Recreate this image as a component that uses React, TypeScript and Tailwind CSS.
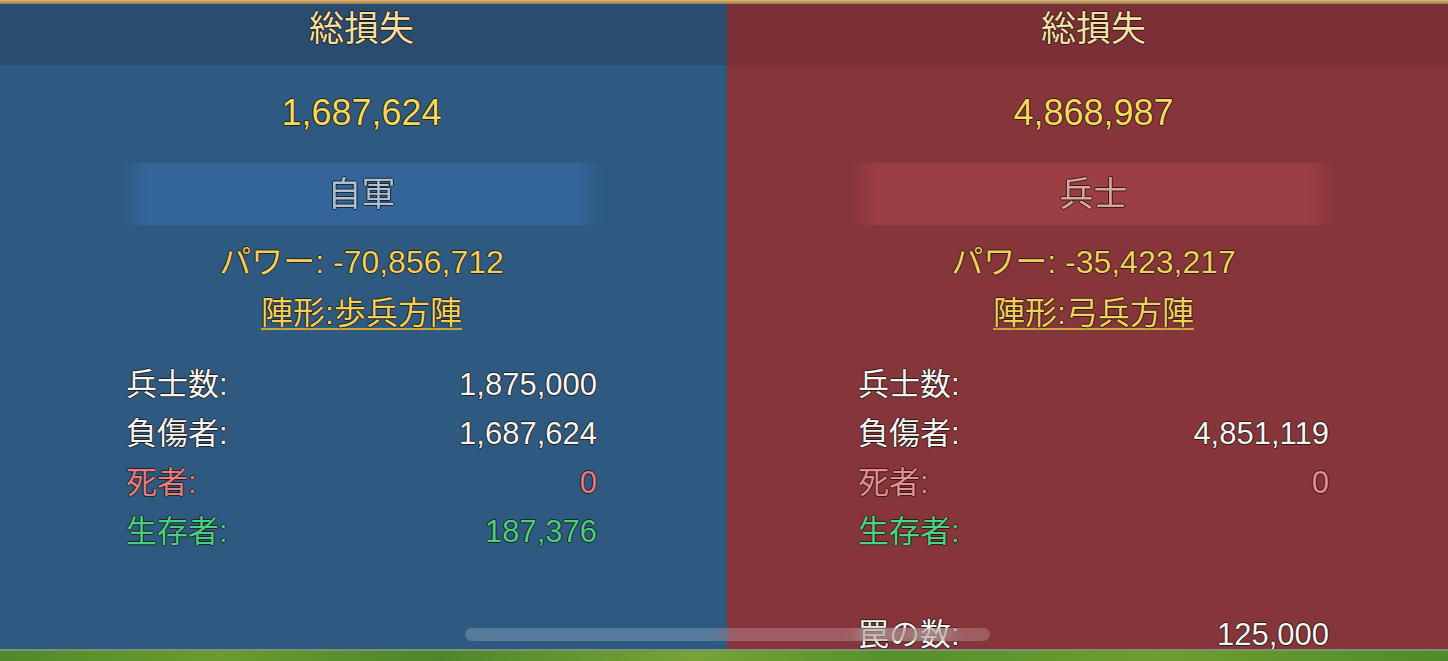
import React from "react";

type Tone = "plain" | "dead" | "alive";

type Stat = { label: string; value?: string; tone: Tone };

type Side = {
  key: string;
  title: string;
  total: string;
  unit: string;
  power: string;
  formation: string;
  stats: Stat[];
  extra?: Stat[];
  theme: {
    panel: string;
    header: string;
    badge: string;
    unitText: string;
    dead: string;
    alive: string;
    pad: string;
  };
};

const outline =
  "[text-shadow:-1px_0_rgba(30,20,10,0.8),1px_0_rgba(30,20,10,0.8),0_-1px_rgba(30,20,10,0.8),0_1px_rgba(30,20,10,0.8)]";

const sides: Side[] = [
  {
    key: "own",
    title: "総損失",
    total: "1,687,624",
    unit: "自軍",
    power: "パワー: -70,856,712",
    formation: "陣形:歩兵方陣",
    stats: [
      { label: "兵士数:", value: "1,875,000", tone: "plain" },
      { label: "負傷者:", value: "1,687,624", tone: "plain" },
      { label: "死者:", value: "0", tone: "dead" },
      { label: "生存者:", value: "187,376", tone: "alive" },
    ],
    theme: {
      panel: "w-[727px] bg-[#2e5a81]",
      header: "bg-[#2a4c6f]",
      badge: "bg-[#33659a]",
      unitText: "text-[#a9c1da]",
      dead: "text-[#e57c80]",
      alive: "text-[#45d084]",
      pad: "pr-[4px]",
    },
  },
  {
    key: "enemy",
    title: "総損失",
    total: "4,868,987",
    unit: "兵士",
    power: "パワー: -35,423,217",
    formation: "陣形:弓兵方陣",
    stats: [
      { label: "兵士数:", tone: "plain" },
      { label: "負傷者:", value: "4,851,119", tone: "plain" },
      { label: "死者:", value: "0", tone: "dead" },
      { label: "生存者:", tone: "alive" },
    ],
    extra: [
      { label: "", tone: "plain" },
      { label: "罠の数:", value: "125,000", tone: "plain" },
    ],
    theme: {
      panel: "flex-1 bg-[#86353b]",
      header: "bg-[#7a3036]",
      badge: "bg-[#9c3f43]",
      unitText: "text-[#dba2a2]",
      dead: "text-[#e88d91]",
      alive: "text-[#48d586]",
      pad: "pl-[12px]",
    },
  },
];

function StatRow({ stat, side }: { stat: Stat; side: Side }) {
  const color =
    stat.tone === "dead"
      ? side.theme.dead
      : stat.tone === "alive"
        ? side.theme.alive
        : "text-[#f5f5f5]";
  return (
    <div className={`flex h-[49px] items-center justify-between text-[31px] leading-[49px] ${color} ${outline}`}>
      <span>{stat.label}</span>
      <span>{stat.value ?? ""}</span>
    </div>
  );
}

function Panel({ side }: { side: Side }) {
  return (
    <div className={`flex flex-col overflow-hidden ${side.theme.panel}`}>
      <div className={`flex h-[61px] shrink-0 items-center justify-center pb-[12px] ${side.theme.header} ${side.theme.pad}`}>
        <span className={`text-[35px] leading-none text-[#f5dfa4] ${outline}`}>{side.title}</span>
      </div>

      <div className={`flex flex-col items-center ${side.theme.pad}`}>
        <div className={`mt-[28px] h-[40px] text-[36px] leading-[40px] text-[#f7da5b] ${outline}`}>
          {side.total}
        </div>

        <div
          className={`mt-[30px] flex h-[62px] w-[487px] items-center justify-center ${side.theme.badge} [mask-image:linear-gradient(to_right,transparent,black_6%,black_94%,transparent)]`}
        >
          <span className={`text-[34px] leading-none ${side.theme.unitText} ${outline}`}>{side.unit}</span>
        </div>

        <div className={`mt-[17px] h-[40px] text-[32px] leading-[40px] text-[#efd05c] ${outline}`}>
          {side.power}
        </div>

        <div
          className={`mt-[15px] h-[33px] border-b-2 border-[#c9a83f] text-[32px] leading-[32px] text-[#efd05c] ${outline}`}
        >
          {side.formation}
        </div>

        <div className="mt-[30px] w-[471px]">
          {side.stats.map((s) => (
            <StatRow key={s.label} stat={s} side={side} />
          ))}
          {side.extra && (
            <div className="mt-[5px]">
              {side.extra.map((s, i) => (
                <StatRow key={i} stat={s} side={side} />
              ))}
            </div>
          )}
        </div>
      </div>
    </div>
  );
}

export default function App() {
  return (
    <div className="relative flex h-[661px] w-full flex-col overflow-hidden bg-[#2e5a81] font-['Liberation_Sans','Noto_Sans_CJK_JP',sans-serif]">
      <div className="h-[4px] shrink-0 bg-gradient-to-b from-[#d8b77a] to-[#9c7a48]" />

      <div className="flex min-h-0 flex-1">
        {sides.map((s) => (
          <Panel key={s.key} side={s} />
        ))}
      </div>

      {/* grass strip under the report */}
      <div className="h-[2px] shrink-0 bg-[#7f8f78]" />
      <div className="h-[10px] shrink-0 bg-[linear-gradient(to_right,#4f8a2a,#6a9c2f_15%,#4d872b_30%,#76a336_48%,#55902c_62%,#6e9e31_80%,#4f8b2a)]" />

      {/* home indicator */}
      <div className="absolute left-[465px] top-[628px] h-[13px] w-[525px] rounded-full bg-white/20 backdrop-blur-sm" />
    </div>
  );
}
